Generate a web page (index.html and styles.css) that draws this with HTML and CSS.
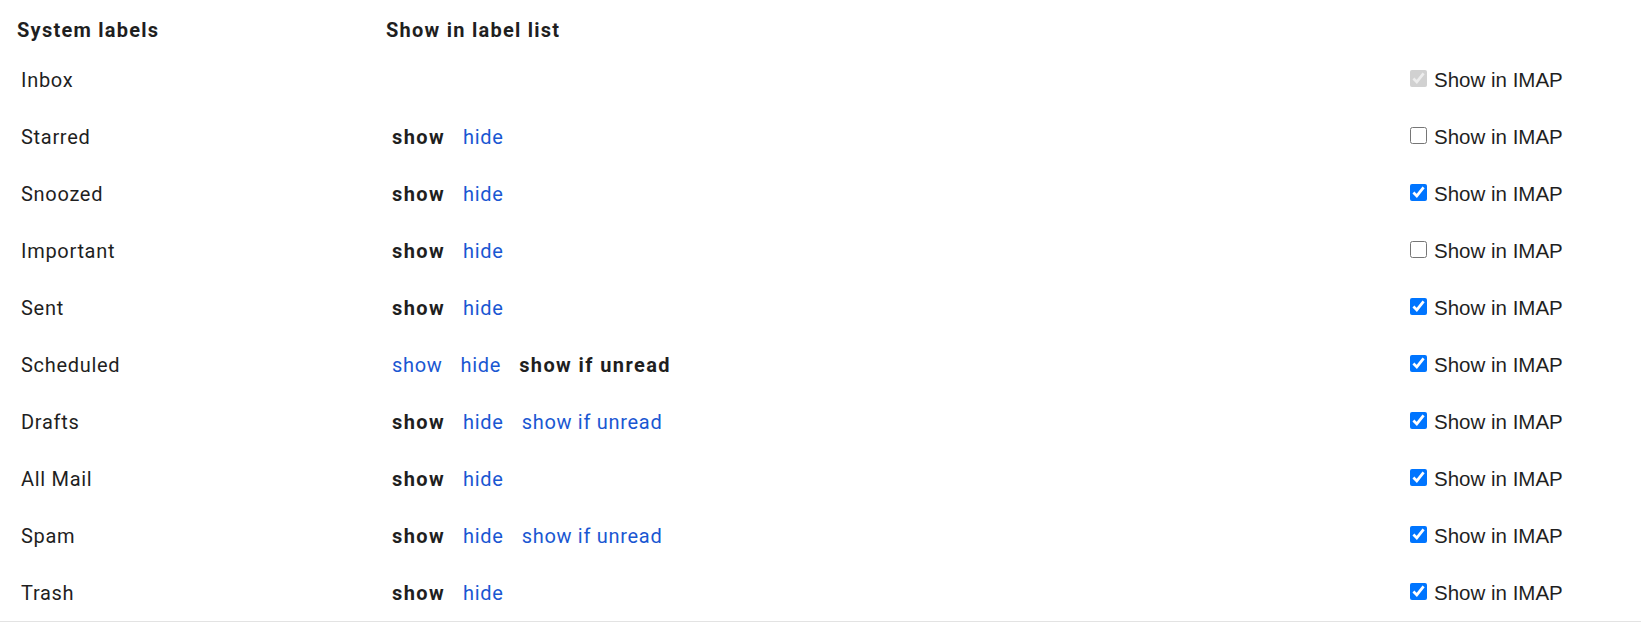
FILE: index.html
```html
<!doctype html>
<html lang="en">
  <head>
    <meta charset="utf-8">
    <title>Labels</title>
    <link rel="stylesheet" href="styles.css">
  </head>
  <body>
    <div class="labels">
      <div class="row head">
        <div class="col-name">System labels</div>
        <div class="col-list">Show in label list</div>
        <div class="col-imap"></div>
      </div>
      <div class="row">
        <div class="col-name">Inbox</div>
        <div class="col-list"></div>
        <div class="col-imap"><label><input type="checkbox" checked disabled>Show in IMAP</label></div>
      </div>
      <div class="row">
        <div class="col-name">Starred</div>
        <div class="col-list"><b>show</b><a>hide</a></div>
        <div class="col-imap"><label><input type="checkbox">Show in IMAP</label></div>
      </div>
      <div class="row">
        <div class="col-name">Snoozed</div>
        <div class="col-list"><b>show</b><a>hide</a></div>
        <div class="col-imap"><label><input type="checkbox" checked>Show in IMAP</label></div>
      </div>
      <div class="row">
        <div class="col-name">Important</div>
        <div class="col-list"><b>show</b><a>hide</a></div>
        <div class="col-imap"><label><input type="checkbox">Show in IMAP</label></div>
      </div>
      <div class="row">
        <div class="col-name">Sent</div>
        <div class="col-list"><b>show</b><a>hide</a></div>
        <div class="col-imap"><label><input type="checkbox" checked>Show in IMAP</label></div>
      </div>
      <div class="row">
        <div class="col-name">Scheduled</div>
        <div class="col-list"><a>show</a><a>hide</a><b>show if unread</b></div>
        <div class="col-imap"><label><input type="checkbox" checked>Show in IMAP</label></div>
      </div>
      <div class="row">
        <div class="col-name">Drafts</div>
        <div class="col-list"><b>show</b><a>hide</a><a>show if unread</a></div>
        <div class="col-imap"><label><input type="checkbox" checked>Show in IMAP</label></div>
      </div>
      <div class="row">
        <div class="col-name">All Mail</div>
        <div class="col-list"><b>show</b><a>hide</a></div>
        <div class="col-imap"><label><input type="checkbox" checked>Show in IMAP</label></div>
      </div>
      <div class="row">
        <div class="col-name">Spam</div>
        <div class="col-list"><b>show</b><a>hide</a><a>show if unread</a></div>
        <div class="col-imap"><label><input type="checkbox" checked>Show in IMAP</label></div>
      </div>
      <div class="row last">
        <div class="col-name">Trash</div>
        <div class="col-list"><b>show</b><a>hide</a></div>
        <div class="col-imap"><label><input type="checkbox" checked>Show in IMAP</label></div>
      </div>
    </div>
  </body>
</html>
```

FILE: styles.css
```css
html, body {
  margin: 0;
  padding: 0;
  background: #fff;
}
.labels {
  padding-left: 17px;
  font-family: Roboto, "Noto Sans", sans-serif;
  font-size: 20px;
  line-height: 24px;
  letter-spacing: 0.7px;
  color: #1f1f1f;
  border-bottom: 2px solid #e3e3e3;
}
.row {
  display: grid;
  grid-template-columns: 369px 1fr 231px;
  align-items: center;
  height: 57px;
}
.row.head {
  height: auto;
  padding: 18px 0 9px;
  font-weight: 700;
  letter-spacing: 1.25px;
}
.row .col-name {
  padding-left: 4px;
}
.row .col-list {
  padding-left: 6px;
}
.row.head .col-name,
.row.head .col-list {
  padding-left: 0;
}
.col-list b,
.col-list a {
  margin-right: 18px;
}
.col-list b {
  font-weight: 700;
  letter-spacing: 1.4px;
}
.col-list a {
  color: #1a57d2;
  cursor: pointer;
}
.col-imap label {
  font-family: "Liberation Sans", Arial, sans-serif;
  font-size: 20.5px;
  letter-spacing: 0;
}
.col-imap input {
  width: 17px;
  height: 17px;
  margin: 0 7px 0 0;
  vertical-align: baseline;
}
```
